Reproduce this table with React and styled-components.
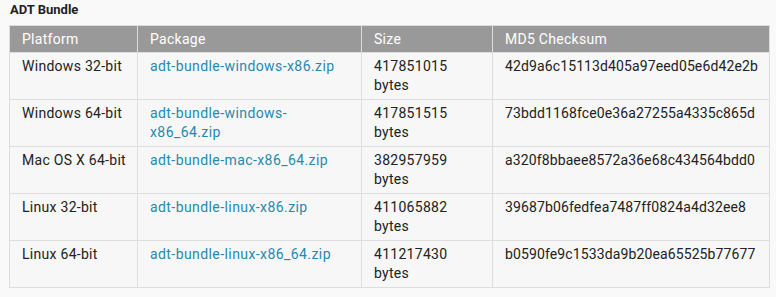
import styled, { createGlobalStyle } from 'styled-components';

const rows = [
  {
    platform: 'Windows 32-bit',
    pkg: 'adt-bundle-windows-x86.zip',
    size: '417851015',
    md5: '42d9a6c15113d405a97eed05e6d42e2b',
  },
  {
    platform: 'Windows 64-bit',
    pkg: 'adt-bundle-windows-x86_64.zip',
    size: '417851515',
    md5: '73bdd1168fce0e36a27255a4335c865d',
  },
  {
    platform: 'Mac OS X 64-bit',
    pkg: 'adt-bundle-mac-x86_64.zip',
    size: '382957959',
    md5: 'a320f8bbaee8572a36e68c434564bdd0',
  },
  {
    platform: 'Linux 32-bit',
    pkg: 'adt-bundle-linux-x86.zip',
    size: '411065882',
    md5: '39687b06fedfea7487ff0824a4d32ee8',
  },
  {
    platform: 'Linux 64-bit',
    pkg: 'adt-bundle-linux-x86_64.zip',
    size: '411217430',
    md5: 'b0590fe9c1533da9b20ea65525b77677',
  },
];

const App = () => {
  return (
    <>
      <GlobalStyle />
      <Page>
        <Title>ADT Bundle</Title>
        <Table>
          <colgroup>
            <col style={{ width: 128 }} />
            <col style={{ width: 224 }} />
            <col style={{ width: 131 }} />
            <col style={{ width: 277 }} />
          </colgroup>
          <thead>
            <tr>
              <Th>Platform</Th>
              <Th>Package</Th>
              <Th>Size</Th>
              <Th>MD5 Checksum</Th>
            </tr>
          </thead>
          <tbody>
            {rows.map((r) => (
              <tr key={r.pkg}>
                <Td $nowrap>{r.platform}</Td>
                <Td>
                  <PkgLink href="#">{r.pkg}</PkgLink>
                </Td>
                <Td>{r.size} bytes</Td>
                <Td $mono>{r.md5}</Td>
              </tr>
            ))}
          </tbody>
        </Table>
      </Page>
    </>
  );
};

const GlobalStyle = createGlobalStyle`
  body {
    margin: 0;
    background: #f9f9f9;
    font-family: Roboto, "Liberation Sans", sans-serif;
  }
`;

const Page = styled.div`
  padding: 3px 0 0 9px;
`;

const Title = styled.h3`
  margin: 0 0 8px 1px;
  font-size: 13px;
  line-height: 14px;
  font-weight: 700;
  color: #222;
`;

const Table = styled.table`
  border-collapse: collapse;
  table-layout: fixed;
  width: 760px;
  background: #f7f7f7;
  border: 1px solid #ddd;
  font-size: 14px;
  line-height: 19px;
  letter-spacing: 0.28px;
  color: #222;
`;

const Th = styled.th`
  background: #999;
  color: #fff;
  font-weight: 400;
  text-align: left;
  padding: 4px 12px 3px;
  border: 1px solid #ddd;
`;

const Td = styled.td`
  vertical-align: top;
  padding: 4px 12px;
  border: 1px solid #ddd;
  white-space: ${(p) => (p.$nowrap ? 'nowrap' : 'normal')};
  letter-spacing: ${(p) => (p.$mono ? '0.12px' : 'inherit')};
`;

const PkgLink = styled.a`
  color: #258aaf;
  text-decoration: none;
  letter-spacing: 0.42px;
`;

export default App;
